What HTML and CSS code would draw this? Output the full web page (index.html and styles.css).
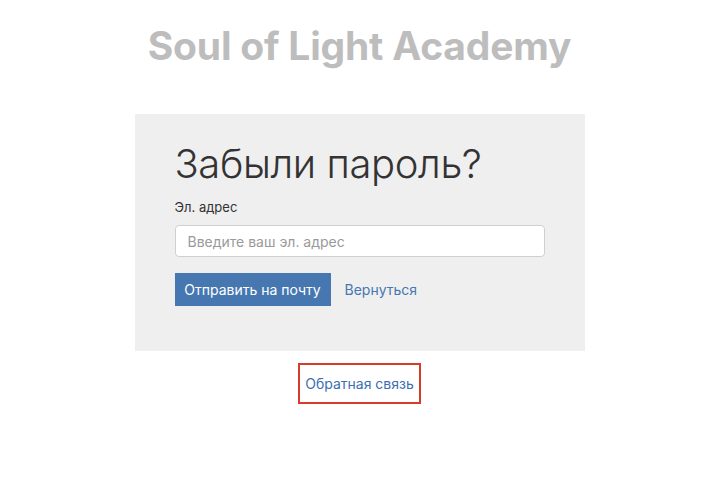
FILE: index.html
```html
<!DOCTYPE html>
<html lang="ru">
<head>
<meta charset="utf-8">
<title>Забыли пароль?</title>
<link rel="stylesheet" href="styles.css">
</head>
<body>
<div class="page">
  <h1 class="brand">Soul of Light Academy</h1>
  <div class="card">
    <h2 class="card-title">Забыли пароль?</h2>
    <label class="label" for="email">Эл. адрес</label>
    <input class="input" id="email" type="text" placeholder="Введите ваш эл. адрес">
    <div class="actions">
      <button class="btn" type="button">Отправить на почту</button>
      <a class="link" href="#">Вернуться</a>
    </div>
  </div>
  <a class="feedback" href="#">Обратная связь</a>
</div>
</body>
</html>
```
FILE: styles.css
```css
* { box-sizing: border-box; }
html, body { margin: 0; padding: 0; background: #fff; }
body { font-family: Inter, "Noto Sans", sans-serif; color: #333; }
.page {
  display: flex;
  flex-direction: column;
  align-items: center;
  padding-top: 20px;
  padding-left: 3px;
}
.brand {
  margin: 0;
  font-size: 39px;
  font-weight: 700;
  line-height: 52px;
  color: #bdbdbd;
  letter-spacing: -0.2px;
}
.card {
  margin-top: 42px;
  width: 450px;
  background: #efefef;
  padding: 26px 40px 45px;
  display: flex;
  flex-direction: column;
}
.card-title {
  margin: 0;
  font-size: 40px;
  font-weight: 300;
  line-height: 48px;
  color: #333;
  letter-spacing: -0.4px;
}
.label {
  margin-top: 10px;
  font-size: 13px;
  line-height: 18px;
  color: #333;
}
.input {
  margin-top: 9px;
  height: 32px;
  width: 370px;
  border: 1px solid #cfcfcf;
  border-radius: 4px;
  background: #fff;
  padding: 0 12px;
  font-family: inherit;
  font-size: 14px;
  color: #333;
  outline: none;
}
.input::placeholder { color: #9a9a9a; }
.actions {
  margin-top: 16px;
  display: flex;
  align-items: center;
  gap: 14px;
}
.btn {
  height: 33px;
  width: 156px;
  border: none;
  border-radius: 0;
  background: #4677b0;
  color: #fff;
  font-family: inherit;
  font-size: 14px;
  padding: 0;
}
.link {
  color: #4677b0;
  font-size: 14px;
  text-decoration: none;
}
.feedback {
  margin-top: 12px;
  width: 123px;
  height: 41px;
  border: 2px solid #d63c2c;
  display: flex;
  align-items: center;
  justify-content: center;
  color: #3b6fb0;
  font-size: 14px;
  text-decoration: none;
}
```
